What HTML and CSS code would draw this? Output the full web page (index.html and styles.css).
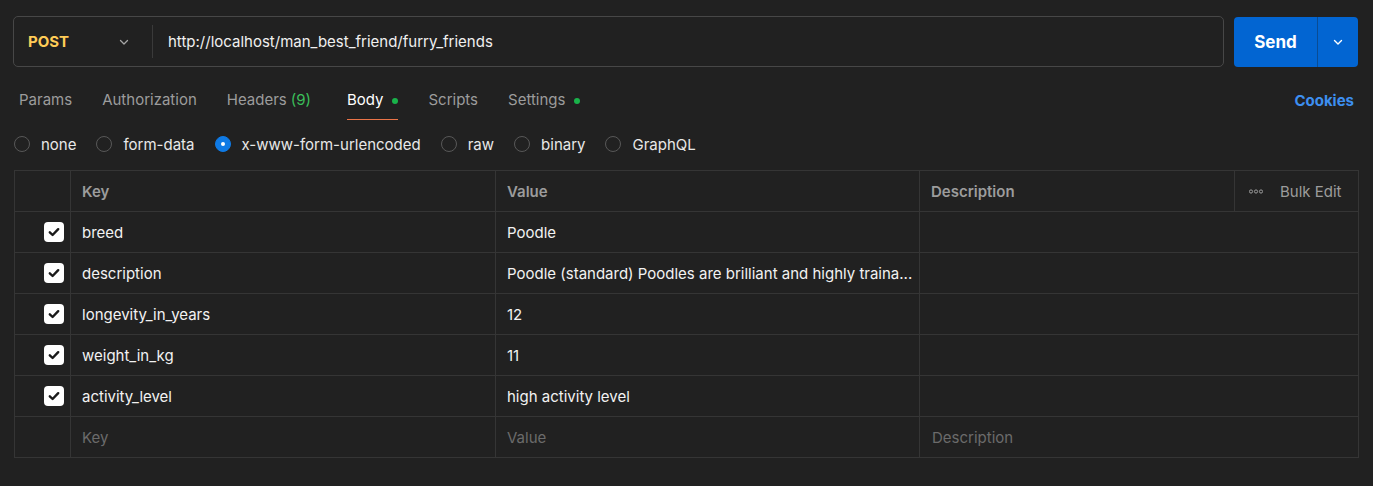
FILE: index.html
```html
<!DOCTYPE html>
<html>
<head>
<meta charset="utf-8">
<link rel="stylesheet" href="styles.css">
</head>
<body>
<div class="page">
  <div class="urlrow">
    <div class="urlbox">
      <div class="method">
        <span class="method-name">POST</span>
        <svg class="chev" width="12" height="12" viewBox="0 0 12 12"><path d="M2.5 4.5 L6 8 L9.5 4.5" fill="none" stroke="#a6a6a6" stroke-width="1.3" stroke-linecap="round" stroke-linejoin="round"/></svg>
      </div>
      <div class="url">http://localhost/man_best_friend/furry_friends</div>
    </div>
    <div class="send">
      <span class="send-label">Send</span>
      <span class="send-menu"><svg width="12" height="12" viewBox="0 0 12 12"><path d="M2.5 4.5 L6 8 L9.5 4.5" fill="none" stroke="#ffffff" stroke-width="1.4" stroke-linecap="round" stroke-linejoin="round"/></svg></span>
    </div>
  </div>

  <div class="tabs">
    <div class="tablist">
      <span class="tab">Params</span>
      <span class="tab">Authorization</span>
      <span class="tab">Headers <span class="count">(9)</span></span>
      <span class="tab active">Body <span class="dot"></span></span>
      <span class="tab">Scripts</span>
      <span class="tab">Settings <span class="dot"></span></span>
    </div>
    <span class="cookies">Cookies</span>
  </div>

  <div class="radios">
    <label class="radio"><span class="circle"></span>none</label>
    <label class="radio"><span class="circle"></span>form-data</label>
    <label class="radio"><span class="circle on"></span>x-www-form-urlencoded</label>
    <label class="radio"><span class="circle"></span>raw</label>
    <label class="radio"><span class="circle"></span>binary</label>
    <label class="radio"><span class="circle"></span>GraphQL</label>
  </div>

  <div class="table">
    <div class="row head">
      <div class="cell chk"></div>
      <div class="cell key">Key</div>
      <div class="cell val">Value</div>
      <div class="cell desc">Description</div>
      <div class="cell bulk"><svg class="dots" width="14" height="5" viewBox="0 0 14 5"><circle cx="2" cy="2.5" r="1.6" fill="none" stroke="#9c9c9c" stroke-width="1"/><circle cx="7" cy="2.5" r="1.6" fill="none" stroke="#9c9c9c" stroke-width="1"/><circle cx="12" cy="2.5" r="1.6" fill="none" stroke="#9c9c9c" stroke-width="1"/></svg>Bulk Edit</div>
    </div>
    <div class="row">
      <div class="cell chk"><span class="box"><svg width="14" height="14" viewBox="0 0 14 14"><path d="M2.8 7.3 L5.6 10 L11.2 4.2" fill="none" stroke="#1a1a1a" stroke-width="2.4" stroke-linecap="round" stroke-linejoin="round"/></svg></span></div>
      <div class="cell key">breed</div>
      <div class="cell val">Poodle</div>
      <div class="cell rest"></div>
    </div>
    <div class="row">
      <div class="cell chk"><span class="box"><svg width="14" height="14" viewBox="0 0 14 14"><path d="M2.8 7.3 L5.6 10 L11.2 4.2" fill="none" stroke="#1a1a1a" stroke-width="2.4" stroke-linecap="round" stroke-linejoin="round"/></svg></span></div>
      <div class="cell key">description</div>
      <div class="cell val">Poodle (standard) Poodles are brilliant and highly traina...</div>
      <div class="cell rest"></div>
    </div>
    <div class="row">
      <div class="cell chk"><span class="box"><svg width="14" height="14" viewBox="0 0 14 14"><path d="M2.8 7.3 L5.6 10 L11.2 4.2" fill="none" stroke="#1a1a1a" stroke-width="2.4" stroke-linecap="round" stroke-linejoin="round"/></svg></span></div>
      <div class="cell key">longevity_in_years</div>
      <div class="cell val">12</div>
      <div class="cell rest"></div>
    </div>
    <div class="row">
      <div class="cell chk"><span class="box"><svg width="14" height="14" viewBox="0 0 14 14"><path d="M2.8 7.3 L5.6 10 L11.2 4.2" fill="none" stroke="#1a1a1a" stroke-width="2.4" stroke-linecap="round" stroke-linejoin="round"/></svg></span></div>
      <div class="cell key">weight_in_kg</div>
      <div class="cell val">11</div>
      <div class="cell rest"></div>
    </div>
    <div class="row">
      <div class="cell chk"><span class="box"><svg width="14" height="14" viewBox="0 0 14 14"><path d="M2.8 7.3 L5.6 10 L11.2 4.2" fill="none" stroke="#1a1a1a" stroke-width="2.4" stroke-linecap="round" stroke-linejoin="round"/></svg></span></div>
      <div class="cell key">activity_level</div>
      <div class="cell val">high activity level</div>
      <div class="cell rest"></div>
    </div>
    <div class="row last">
      <div class="cell chk"></div>
      <div class="cell key ph">Key</div>
      <div class="cell val ph">Value</div>
      <div class="cell rest ph">Description</div>
    </div>
  </div>
</div>
</body>
</html>
```

FILE: styles.css
```css
* { box-sizing: border-box; }
html, body { margin: 0; padding: 0; background: #212121; }
body {
  font-family: Inter, "Noto Sans", "Liberation Sans", sans-serif;
  font-size: 15px;
  color: #ffffff;
  width: 1373px;
  height: 486px;
  overflow: hidden;
}
.page { padding: 16px 15px 0 13px; }

.urlrow { display: flex; gap: 10px; height: 51px; }
.urlbox {
  flex: 1;
  display: flex;
  align-items: center;
  border: 1px solid #474747;
  border-radius: 5px;
}
.method {
  width: 139px;
  height: 33px;
  display: flex;
  align-items: center;
  justify-content: space-between;
  padding: 0 22px 0 14px;
  border-right: 1px solid #3a3a3a;
}
.method-name { color: #ffcc57; font-weight: 700; font-size: 15px; }
.chev { display: block; }
.url { padding-left: 15px; color: #f0f0f0; font-size: 15px; }

.send {
  width: 124px;
  height: 50px;
  margin-top: 1px;
  display: flex;
  background: #0265d2;
  border-radius: 4px;
}
.send-label {
  flex: 1;
  display: flex;
  align-items: center;
  justify-content: center;
  font-weight: 700;
  font-size: 17px;
  border-right: 1px solid #0a4c94;
}
.send-menu { width: 40px; display: flex; align-items: center; justify-content: center; }
.send-menu svg { display: block; }

.tabs {
  display: flex;
  justify-content: space-between;
  align-items: flex-start;
  padding: 0 4px 0 6px;
}
.tablist { display: flex; gap: 30px; }
.tab {
  color: #9c9c9c;
  font-size: 15px;
  padding: 24px 0 10px;
  line-height: 18px;
  display: flex;
  align-items: center;
  gap: 4px;
  border-bottom: 1px solid transparent;
}
.tab .count { color: #3bbf5a; }
.tab.active { color: #ffffff; border-bottom-color: #ea7448; margin-left: 6px; }
.dot { width: 6px; height: 6px; border-radius: 50%; background: #19b34a; display: inline-block; margin-left: 5px; margin-top: 1px; }
.cookies { color: #3d8ff0; font-weight: 700; font-size: 15px; padding-top: 25px; line-height: 18px; }

.radios { display: flex; align-items: center; gap: 20px; height: 38px; margin-top: 5px; padding-left: 1px; }
.radio { display: flex; align-items: center; gap: 11px; color: #e8e8e8; font-size: 15px; }
.circle {
  width: 16px; height: 16px; border-radius: 50%;
  border: 1px solid #585858;
  display: inline-block;
}
.circle.on {
  background: #0f7ae5;
  border-color: #0f7ae5;
  position: relative;
}
.circle.on::after {
  content: "";
  position: absolute;
  left: 5px; top: 5px;
  width: 4px; height: 4px; border-radius: 50%;
  background: #fff;
}

.table {
  margin-top: 7px;
  margin-left: 1px;
  border: 1px solid #353535;
  border-bottom: none;
  width: 1345px;
}
.row { display: flex; height: 41px; border-bottom: 1px solid #353535; }
.cell {
  display: flex;
  align-items: center;
  padding: 0 11px;
  white-space: nowrap;
  overflow: hidden;
  font-size: 15px;
  color: #f2f2f2;
}
.chk { width: 56px; border-right: 1px solid #353535; justify-content: flex-end; padding: 0 6px 0 0; }
.key { width: 425px; border-right: 1px solid #353535; }
.val { width: 424px; border-right: 1px solid #353535; }
.desc { width: 315px; border-right: 1px solid #353535; }
.rest { flex: 1; padding-left: 12px; }
.bulk { flex: 1; color: #9c9c9c; padding-left: 14px; gap: 17px; }
.dots { display: block; }
.head .cell { color: #9c9c9c; font-weight: 600; }
.head .bulk { font-weight: 400; }
.ph { color: #6b6b6b; }
.box {
  width: 20px; height: 20px;
  background: #ffffff;
  border-radius: 4px;
  display: flex;
  align-items: center;
  justify-content: center;
}
.box svg { display: block; }
```
